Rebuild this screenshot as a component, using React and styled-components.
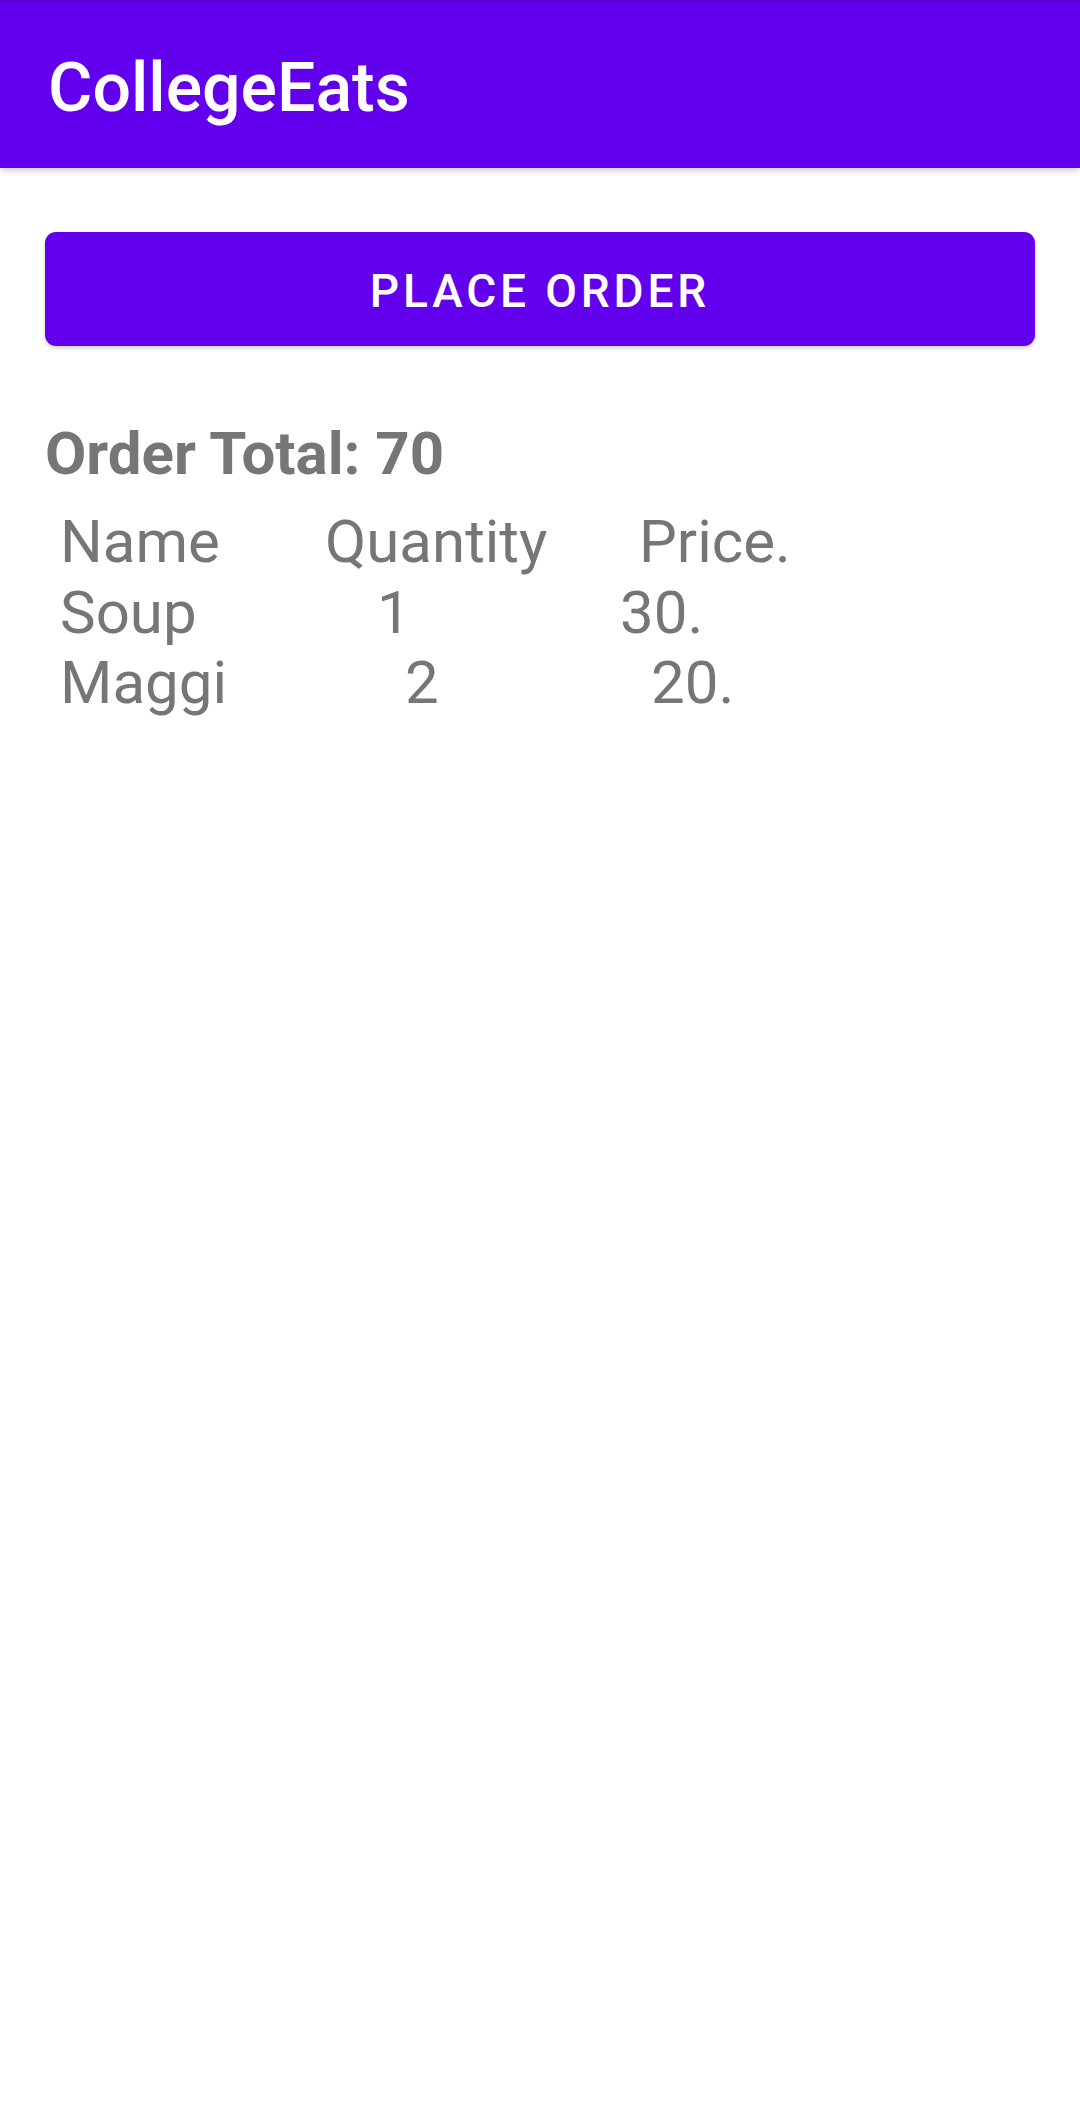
import React from "react";
import styled, { createGlobalStyle } from "styled-components";

const Global = createGlobalStyle`
  html, body { margin: 0; padding: 0; background: #ffffff; }
  body { font-family: Roboto, "Noto Sans", "Liberation Sans", sans-serif; }
  * { box-sizing: border-box; }
`;

const Screen = styled.div`
  width: 1080px;
  min-height: 2114px;
  background: #ffffff;
  display: flex;
  flex-direction: column;
`;

const AppBar = styled.header`
  height: 168px;
  background: #6200ee;
  border-top: 2px solid #5400d6;
  display: flex;
  align-items: center;
  padding: 6px 0 0 48px;
  box-shadow: 0 3px 6px rgba(0, 0, 0, 0.18);
  position: relative;
  z-index: 1;
`;

const Title = styled.h1`
  margin: 0;
  font-family: Roboto, sans-serif;
  font-weight: 500;
  font-size: 68px;
  line-height: 1;
  color: #ffffff;
`;

const Content = styled.main`
  display: flex;
  flex-direction: column;
  padding: 64px 45px 0 45px;
`;

const PrimaryButton = styled.button`
  height: 114px;
  width: 100%;
  border: none;
  border-radius: 11px;
  background: #6200ee;
  color: #ffffff;
  font-family: Roboto, sans-serif;
  font-weight: 500;
  font-size: 46px;
  letter-spacing: 0.084em;
  padding: 4px 0 0 0;
  text-transform: uppercase;
  box-shadow: 0 2px 4px rgba(0, 0, 0, 0.2);
  cursor: pointer;
`;

const Total = styled.h2`
  margin: 72px 0 0 0;
  font-family: Roboto, sans-serif;
  font-weight: 700;
  font-size: 60px;
  line-height: normal;
  color: #767676;
`;

const Table = styled.div`
  margin-top: 18px;
  padding-left: 15px;
  display: grid;
  grid-template-columns: 265px 295px 1fr;
  font-family: Roboto, sans-serif;
  font-size: 60px;
  line-height: 70.5px;
  color: #767676;
`;

const Cell = styled.span`
  padding-left: ${(p) => p.$indent || 0}px;
  white-space: pre;
`;

const rows = [
  ["Name", 0, "Quantity", 0, "Price.", 19],
  ["Soup", 0, "1", 52, "30.", 0],
  ["Maggi", 0, "2", 80, "20.", 31],
];

export default function App() {
  return (
    <Screen>
      <Global />
      <AppBar>
        <Title>CollegeEats</Title>
      </AppBar>
      <Content>
        <PrimaryButton>Place Order</PrimaryButton>
        <Total>Order Total: 70</Total>
        <Table>
          {rows.map((r) => (
            <React.Fragment key={r[0]}>
              <Cell $indent={r[1]}>{r[0]}</Cell>
              <Cell $indent={r[3]}>{r[2]}</Cell>
              <Cell $indent={r[5]}>{r[4]}</Cell>
            </React.Fragment>
          ))}
        </Table>
      </Content>
    </Screen>
  );
}
